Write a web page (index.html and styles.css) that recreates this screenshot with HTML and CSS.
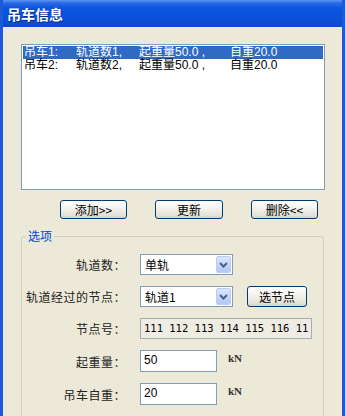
FILE: index.html
```html
<!DOCTYPE html>
<html lang="zh-CN">
<head>
  <meta charset="UTF-8">
  <title>吊车信息</title>
  <meta name="viewport" content="width=device-width, initial-scale=1.0">
  <link rel="stylesheet" href="styles.css">
</head>
<body>

  <div class="window">
    <div class="titlebar">吊车信息</div>

    <div class="client">

      <!-- crane list -->
      <div class="listbox">
        <div class="item selected">
          <span class="c1">吊车1:</span><span class="c2">轨道数1,</span><span class="c3">起重量50.0 ,</span><span>自重20.0</span>
        </div>
        <div class="item">
          <span class="c1">吊车2:</span><span class="c2">轨道数2,</span><span class="c3">起重量50.0 ,</span><span>自重20.0</span>
        </div>
      </div>

      <div class="actions">
        <button class="xp-btn">添加&gt;&gt;</button>
        <button class="xp-btn wide">更新</button>
        <button class="xp-btn">删除&lt;&lt;</button>
      </div>

      <!-- options -->
      <fieldset class="group">
        <legend>选项</legend>
        <div class="form">
          <label>轨道数：</label>
          <div class="field">
            <div class="combo"><span class="combo-text">单轨</span><span class="drop"><svg width="9" height="6" viewBox="0 0 9 6"><path d="M1 1 L4.5 4.5 L8 1" fill="none" stroke="#4D6185" stroke-width="2"/></svg></span></div>
          </div>

          <label>轨道经过的节点：</label>
          <div class="field">
            <div class="combo"><span class="combo-text">轨道1</span><span class="drop"><svg width="9" height="6" viewBox="0 0 9 6"><path d="M1 1 L4.5 4.5 L8 1" fill="none" stroke="#4D6185" stroke-width="2"/></svg></span></div>
            <button class="xp-btn pick">选节点</button>
          </div>

          <label>节点号：</label>
          <div class="field">
            <div class="readonly">111 112 113 114 115 116 11</div>
          </div>

          <label>起重量：</label>
          <div class="field">
            <div class="edit">50</div>
            <span class="unit">kN</span>
          </div>

          <label>吊车自重：</label>
          <div class="field">
            <div class="edit">20</div>
            <span class="unit">kN</span>
          </div>
        </div>
      </fieldset>

    </div>
  </div>

</body>
</html>
```

FILE: styles.css
```css
body { margin:0; font-family:"Liberation Sans", "Noto Sans CJK SC", sans-serif; font-size:12px; color:#000; overflow:hidden; }

.window {
  height:416px; overflow:hidden; background:#ECE9D8;
  border-left:3px solid #1D5AD8; border-right:3px solid #1D5AD8;
}
.titlebar {
  height:27px; margin:0 -3px; padding-left:7px; box-sizing:border-box;
  background:linear-gradient(#5C97F0 0, #2A6AE6 3px, #0D55DE 8px, #0A52D9 60%, #0B4BCB 100%);
  color:#fff; font-weight:bold; font-size:14px; line-height:29px;
  font-family:"Noto Sans CJK SC", sans-serif;
  text-shadow:1px 1px 0 #0A2E85;
}
.client { padding:17px 17px 0 18px; }

/* list */
.listbox {
  height:146px; box-sizing:border-box; padding:1px;
  border:1px solid #7F9DB9; background:#fff;
}
.item { height:13px; line-height:13px; padding-left:1px; white-space:nowrap; font-size:12px; }
.item span { display:inline-block; }
.item .c1 { width:52px; }
.item .c2 { width:63px; }
.item .c3 { width:91px; }
.selected { background:#316AC5; color:#fff; }

/* buttons */
.actions { display:flex; gap:28px; margin:10px 0 0 39px; }
.xp-btn {
  width:67px; height:19px; padding:0; border:1px solid #003C74; border-radius:3px;
  background:linear-gradient(#FFFFFF 0, #F4F3EE 40%, #E4E1D6 85%, #D6D0C5 100%);
  font-family:"Noto Sans CJK SC", sans-serif; font-size:12px; line-height:16px; color:#000;
}
.xp-btn.wide { width:68px; }
.xp-btn.pick { width:60px; height:21px; margin-left:14px; }

/* group box */
.group {
  margin:10px 1px 0 0; padding:11px 0 20px 0;
  border:1px solid #D0D0BF; border-radius:3px;
}
.group legend {
  margin-left:4px; padding:0 2px; line-height:14px;
  color:#0046D5; font-family:"Noto Sans CJK SC", sans-serif;
}
.form {
  display:grid; grid-template-columns:104px auto;
  column-gap:14px; row-gap:11px; align-items:center;
}
.form label {
  text-align:right; font-family:"Noto Sans CJK SC", sans-serif; color:#222;
  letter-spacing:0.5px;
}
.field { display:flex; align-items:center; }

.combo {
  width:93px; height:21px; box-sizing:border-box; display:flex; align-items:center;
  border:1px solid #7F9DB9; background:#fff;
}
.combo-text { flex:1; padding-left:4px; font-family:"Noto Sans CJK SC", sans-serif; }
.drop {
  width:15px; height:17px; margin-right:1px; border-radius:2px; box-sizing:border-box;
  border:1px solid #B9CDF7; background:linear-gradient(#DCE7FD, #C1D3FB 60%, #B3C8F5);
  display:flex; align-items:center; justify-content:center;
}

.readonly {
  width:172px; height:21px; box-sizing:border-box; padding-left:3px;
  border:1px solid #A5ACB2; background:#EFEDE3;
  font-family:"DejaVu Sans Mono", monospace; font-size:10.5px; line-height:19px;
  white-space:nowrap; overflow:hidden;
}
.edit {
  width:77px; height:22px; box-sizing:border-box; padding-left:3px;
  border:1px solid #7F9DB9; background:#fff; line-height:18px;
}
.unit {
  margin:0 0 6px 11px; font-family:"Liberation Serif", serif; font-size:11px;
  font-weight:bold; color:#333;
}
```
